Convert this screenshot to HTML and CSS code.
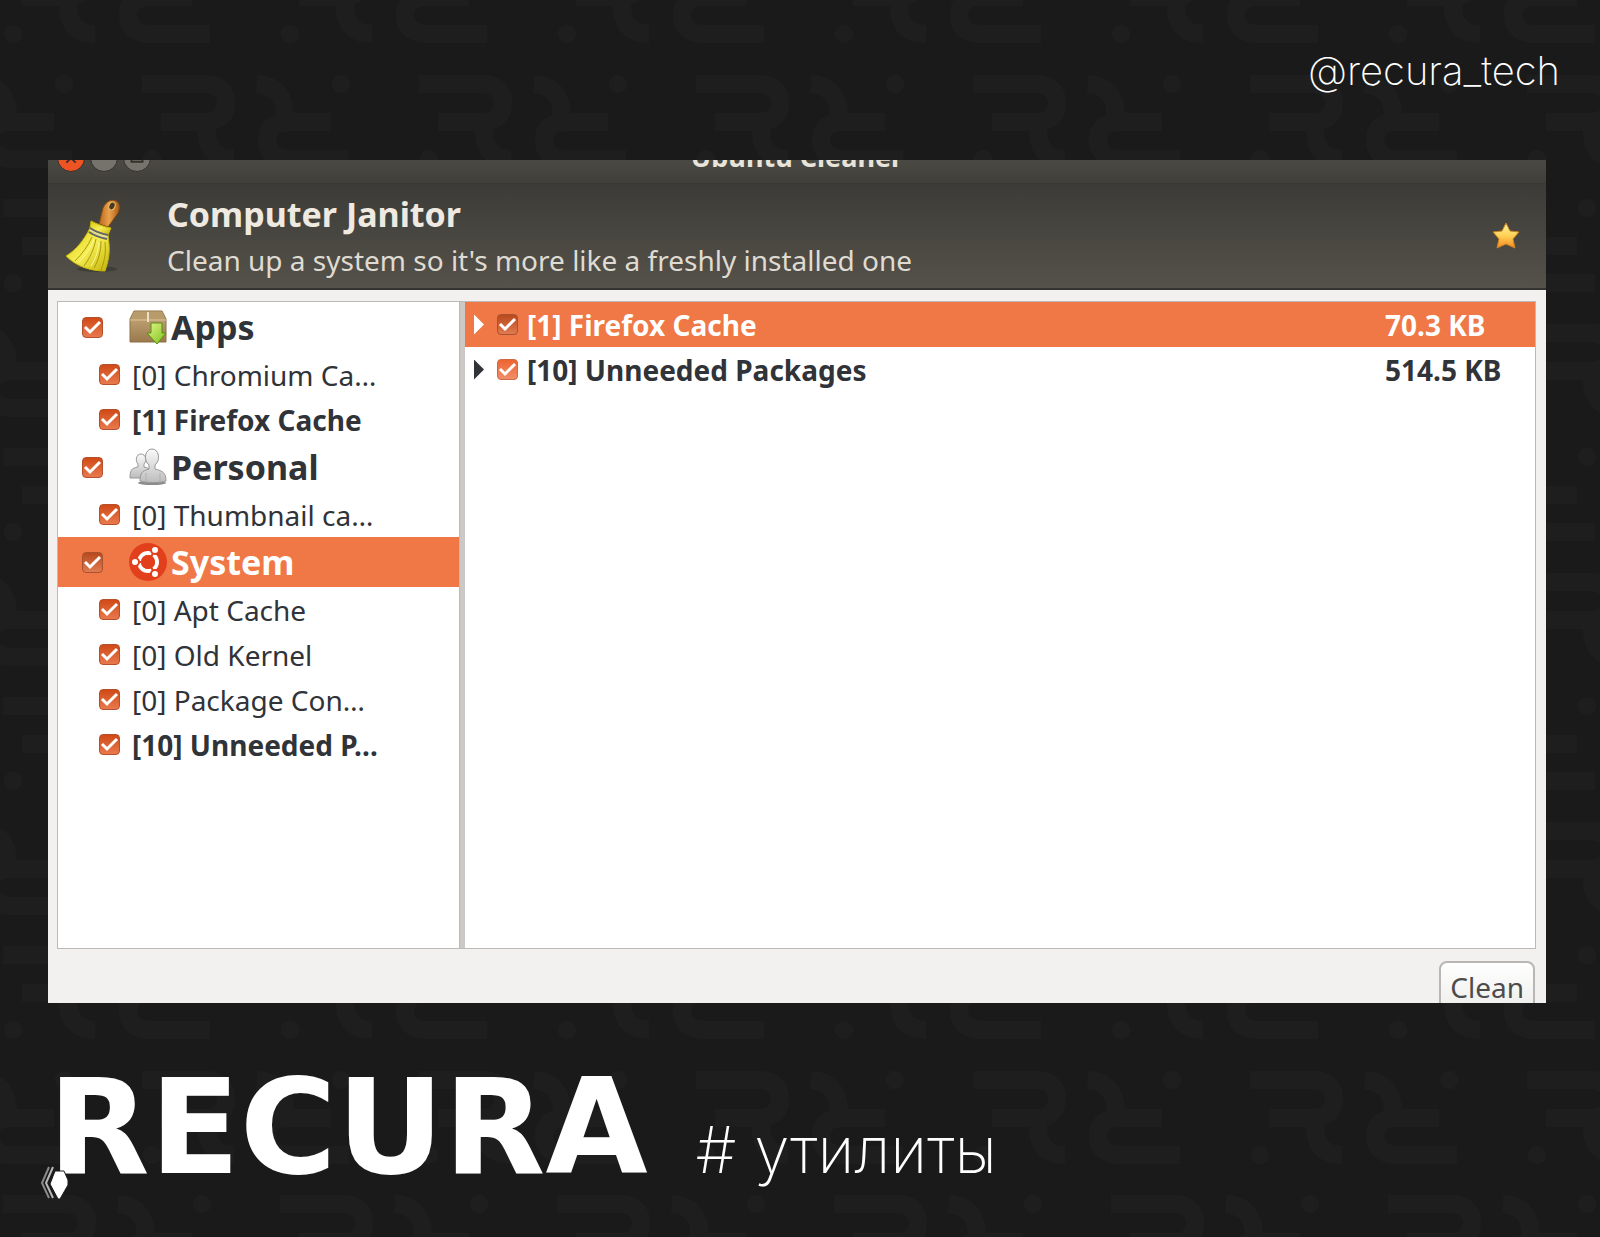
FILE: index.html
```html
<!DOCTYPE html>
<html lang="ru">
<head>
    <meta charset="UTF-8">
    <meta name="viewport" content="width=device-width, initial-scale=1.0">
    <title>RECURA # утилиты</title>
    <link rel="stylesheet" href="styles.css">
</head>
<body>
    <header class="top">
        <a href="#" class="handle">@recura_tech</a>
    </header>

    <main class="window">
        <div class="titlebar">
            <div class="window-buttons">
                <button class="wbtn close" aria-label="Close">
                    <svg viewBox="0 0 28 28"><path d="M9 9l10 10M19 9L9 19"/></svg>
                </button>
                <button class="wbtn" aria-label="Minimize">
                    <svg viewBox="0 0 28 28"><path d="M9 14h10"/></svg>
                </button>
                <button class="wbtn" aria-label="Maximize">
                    <svg viewBox="0 0 28 28"><path d="M8 9h12v9H8z"/></svg>
                </button>
            </div>
            <div class="window-title">Ubuntu Cleaner</div>
        </div>

        <div class="banner">
            <svg class="broom" viewBox="0 0 56 74">
                <defs>
                    <linearGradient id="wood" x1="0" x2="1">
                        <stop offset="0" stop-color="#b8691b"/>
                        <stop offset=".5" stop-color="#eaa14b"/>
                        <stop offset="1" stop-color="#a85d16"/>
                    </linearGradient>
                    <linearGradient id="straw" x1="0" x2="1" y2="1">
                        <stop offset="0" stop-color="#d8c80c"/>
                        <stop offset=".5" stop-color="#f6ee54"/>
                        <stop offset="1" stop-color="#c4b208"/>
                    </linearGradient>
                </defs>
                <ellipse cx="32" cy="70" rx="20" ry="3" fill="#2e2d29" opacity=".5"/>
                <path d="M34 25L38 9C41 2 47 0 51 2c4 2 4 7 2 12L43 28z" fill="url(#wood)" stroke="#8a4c10"/>
                <ellipse cx="47" cy="7" rx="3" ry="4" transform="rotate(25 47 7)" fill="#4b3a22" stroke="#f0c070"/>
                <path d="M26 22c6 3 13 6 20 7l-3 7c-7-1-13-4-18-7z" fill="url(#straw)" stroke="#c5b60b"/>
                <path d="M25 29c6 4 12 6 18 7l1 9c1 10-1 18-4 27C26 72 12 68 1 57c10-6 18-16 24-28z" fill="url(#straw)" stroke="#c5b60b"/>
                <path d="M27 38C23 47 17 55 10 62M31 40C29 50 25 59 19 67M36 42c0 10-2 18-7 27M40 43c1 10 0 18-4 28" fill="none" stroke="#a89a08"/>
                <path d="M29 40C25 50 20 57 14 63M34 43c-1 9-3 16-8 24" fill="none" stroke="#fbf79a"/>
                <path d="M25 29c6 4 12 6 18 7M24 33c6 4 12 6 18 7" fill="none" stroke="#65656d" stroke-width="2"/>
                <path d="M25 31c6 4 12 6 17 7" fill="none" stroke="#d8d8d8"/>
            </svg>
            <div class="banner-text">
                <h1>Computer Janitor</h1>
                <p>Clean up a system so it's more like a freshly installed one</p>
            </div>
            <button class="star" aria-label="Favourite">
                <svg viewBox="0 0 28 28">
                    <defs>
                        <linearGradient id="gold" x2="0" y2="1">
                            <stop offset="0" stop-color="#fff3a0"/>
                            <stop offset=".5" stop-color="#ffd257"/>
                            <stop offset="1" stop-color="#f58a1f"/>
                        </linearGradient>
                    </defs>
                    <path d="M14 1l4 8 9 1-6 7 2 9-9-4-9 4 2-9-6-7 9-1z" fill="url(#gold)" stroke="#c9821c" stroke-linejoin="round"/>
                </svg>
            </button>
        </div>

        <div class="content">
            <div class="panes">
                <ul class="tree">
                    <li>
                        <label class="row group">
                            <input type="checkbox" checked>
                            <svg class="icon" viewBox="0 0 38 38">
                                <defs>
                                    <linearGradient id="box" x2="0" y2="1">
                                        <stop offset="0" stop-color="#c9ab7c"/>
                                        <stop offset="1" stop-color="#9a7a4d"/>
                                    </linearGradient>
                                    <linearGradient id="arrow" x2="1" y2="1">
                                        <stop offset="0" stop-color="#e2f68a"/>
                                        <stop offset="1" stop-color="#7cc018"/>
                                    </linearGradient>
                                </defs>
                                <path d="M1 11L5 3h28l4 8v23H1z" fill="url(#box)" stroke="#8d7044"/>
                                <path d="M2 11L6 4h26l4 7z" fill="#b99a6a"/>
                                <path d="M1 12h36" stroke="#dcc49b"/>
                                <path d="M19 4v10" stroke="#eadfc8" stroke-width="2"/>
                                <path d="M22 15h11v10h4l-9 11-10-11h4z" fill="url(#arrow)" stroke="#539010" stroke-linejoin="round"/>
                            </svg>
                            <span>Apps</span>
                        </label>
                        <ul>
                            <li><label class="row"><input type="checkbox" checked><span>[0] Chromium Ca…</span></label></li>
                            <li><label class="row bold"><input type="checkbox" checked><span>[1] Firefox Cache</span></label></li>
                        </ul>
                    </li>
                    <li>
                        <label class="row group">
                            <input type="checkbox" checked>
                            <svg class="icon" viewBox="0 0 38 38">
                                <defs>
                                    <linearGradient id="silver" x2="0" y2="1">
                                        <stop offset="0" stop-color="#fafafa"/>
                                        <stop offset="1" stop-color="#bdbdbd"/>
                                    </linearGradient>
                                </defs>
                                <ellipse cx="23" cy="35" rx="14" ry="2" fill="#8c8c8c"/>
                                <g fill="url(#silver)" stroke="#989898">
                                    <path d="M1 30c0-7 1-10 8-11V16C6 13 7 6 12 6s6 7 3 10v3c6 1 8 4 8 11z"/>
                                    <path d="M11 33c0-8 2-10 9-12v-4c-6-5-4-16 3-16s9 11 3 16v4c8 2 11 4 11 12-6 2-20 2-26 0z"/>
                                </g>
                                <path d="M17 25v9M31 25v9" stroke="#b0b0b0"/>
                            </svg>
                            <span>Personal</span>
                        </label>
                        <ul>
                            <li><label class="row"><input type="checkbox" checked><span>[0] Thumbnail ca…</span></label></li>
                        </ul>
                    </li>
                    <li>
                        <label class="row group selected">
                            <input type="checkbox" checked>
                            <svg class="icon" viewBox="0 0 38 38">
                                <circle cx="19" cy="19" r="19" fill="#e2401c"/>
                                <circle cx="19" cy="19" r="9" fill="none" stroke="#fff" stroke-width="4"/>
                                <g stroke="#e2401c" stroke-width="2">
                                    <path d="M19 19H5M19 19l7-12M19 19l7 12"/>
                                    <circle cx="6" cy="19" r="4" fill="#fff"/>
                                    <circle cx="26" cy="7" r="4" fill="#fff"/>
                                    <circle cx="26" cy="31" r="4" fill="#fff"/>
                                </g>
                                <circle cx="19" cy="19" r="7" fill="#e2401c"/>
                            </svg>
                            <span>System</span>
                        </label>
                        <ul>
                            <li><label class="row"><input type="checkbox" checked><span>[0] Apt Cache</span></label></li>
                            <li><label class="row"><input type="checkbox" checked><span>[0] Old Kernel</span></label></li>
                            <li><label class="row"><input type="checkbox" checked><span>[0] Package Con…</span></label></li>
                            <li><label class="row bold"><input type="checkbox" checked><span>[10] Unneeded P…</span></label></li>
                        </ul>
                    </li>
                </ul>

                <div class="results">
                    <table>
                        <tbody>
                            <tr class="selected">
                                <td>
                                    <div class="result">
                                        <button class="expander" aria-label="Expand"></button>
                                        <input type="checkbox" id="firefox" checked>
                                        <label for="firefox">[1] Firefox Cache</label>
                                    </div>
                                </td>
                                <td class="size">70.3 KB</td>
                            </tr>
                            <tr>
                                <td>
                                    <div class="result">
                                        <button class="expander" aria-label="Expand"></button>
                                        <input type="checkbox" id="packages" class="light" checked>
                                        <label for="packages">[10] Unneeded Packages</label>
                                    </div>
                                </td>
                                <td class="size">514.5 KB</td>
                            </tr>
                        </tbody>
                    </table>
                </div>
            </div>
            <div class="actions">
                <button class="clean">Clean</button>
            </div>
        </div>
    </main>

    <footer class="brand">
        <div class="logo">
            RECURA
            <svg class="pen" viewBox="0 0 30 34">
                <path d="M9 1L2 17l7 15" fill="none" stroke="#8a8a8a" stroke-width="2"/>
                <path d="M13 1L6 17l7 15" fill="none" stroke="#b8b8b8" stroke-width="2"/>
                <path d="M15 5h9l4 9v5l-8 14h-2l-8-15z" fill="#fff" stroke="#1a1a1a"/>
            </svg>
        </div>
        <div class="tag"># утилиты</div>
    </footer>
</body>
</html>
```
FILE: styles.css
```css
* {
    margin: 0;
    padding: 0;
    box-sizing: border-box;
}

body {
    display: flex;
    flex-direction: column;
    height: 100vh;
    padding: 0 54px 0 48px;
    font-family: "Noto Sans", "Open Sans", sans-serif;
    font-size: 28px;
    color: #303338;
    background-color: #1a1a1a;
    /* repeating brand ornament, two staggered rows per tile */
    background-image: url("data:image/svg+xml,%3Csvg xmlns='http://www.w3.org/2000/svg' width='277' height='249'%3E%3Cdefs%3E%3Cg id='a'%3E%3Cg fill='none' stroke='%231e1e1e' stroke-width='18'%3E%3Cpath d='M5 14H70Q89 16 89 33T70 52H24M70 56V64Q72 89 97 89M120 14Q148 16 148 47M194 52H150Q130 53 130 70T150 89H212'/%3E%3C/g%3E%3Cg fill='%231e1e1e'%3E%3Ccircle cx='15' cy='89' r='9'/%3E%3Ccircle cx='204' cy='14' r='9'/%3E%3C/g%3E%3C/g%3E%3C/defs%3E%3Cuse href='%23a'/%3E%3Cuse href='%23a' x='138' y='124'/%3E%3Cuse href='%23a' x='-139' y='124'/%3E%3C/svg%3E");
    background-position: 137px 70px;
}

ul {
    list-style: none;
}

button {
    border: none;
    background: none;
    font: inherit;
    cursor: pointer;
}

.top {
    display: flex;
    justify-content: flex-end;
    align-items: center;
    height: 160px;
    padding: 0 0 20px;
    margin-right: -14px;
    flex-shrink: 0;
}

.handle {
    font-family: Inter, sans-serif;
    font-size: 40px;
    font-weight: 200;
    color: #fff;
    text-decoration: none;
}

/* window */
.window {
    display: flex;
    flex-direction: column;
    flex: 1;
    min-height: 0;
    overflow: hidden;
    background-color: #f2f1f0;
}

.titlebar {
    position: relative;
    display: flex;
    align-items: flex-end;
    justify-content: center;
    height: 24px;
    overflow: hidden;
    flex-shrink: 0;
    background: linear-gradient(#4a4943, #403f3a);
    border-bottom: 1px solid #3a3934;
}

.window-buttons {
    position: absolute;
    left: 9px;
    bottom: 11px;
    display: flex;
    gap: 5px;
}

.wbtn {
    width: 28px;
    height: 28px;
    border-radius: 50%;
    border: 1px solid #33322e;
    background: #75736b;
}

.wbtn.close {
    background: #ee5423;
}

.wbtn svg {
    display: block;
    fill: none;
    stroke: #33322e;
    stroke-width: 2;
}

.window-title {
    font-size: 27px;
    font-weight: bold;
    line-height: 36px;
    padding-bottom: 8px;
    color: #e8e4da;
}

.banner {
    display: flex;
    align-items: center;
    height: 106px;
    padding: 0 26px 0 17px;
    flex-shrink: 0;
    background: linear-gradient(#3c3b37, #55524a);
    border-bottom: 2px solid #34332f;
}

.broom {
    width: 56px;
    height: 78px;
}

.banner-text {
    flex: 1;
    padding-left: 46px;
    color: #dfdbd2;
}

.banner-text h1 {
    font-size: 34px;
    line-height: 48px;
    color: #eeeae2;
}

.banner-text p {
    line-height: 44px;
}

.star,
.star svg {
    display: block;
    width: 28px;
    height: 28px;
}

.content {
    display: flex;
    flex-direction: column;
    flex: 1;
    min-height: 0;
    padding: 11px 10px 0 9px;
}

.panes {
    display: flex;
    flex: 1;
    gap: 5px;
    min-height: 0;
    background: #cbc8c5;
    border: 1px solid #bcb9b6;
}

.tree {
    flex: 0 0 402px;
    background: #fff;
    border-right: 1px solid #bcb9b6;
}

.row {
    display: flex;
    align-items: center;
    height: 45px;
    padding-left: 41px;
    gap: 12px;
    white-space: nowrap;
}

.group {
    height: 50px;
    padding-left: 24px;
    gap: 4px;
    font-size: 34px;
    font-weight: bold;
}

.group input {
    margin-right: 22px;
}

.icon {
    width: 38px;
    height: 38px;
}

.bold {
    font-weight: bold;
}

.selected {
    color: #fff;
    background: #f07746;
}

input[type="checkbox"] {
    appearance: none;
    flex-shrink: 0;
    width: 21px;
    height: 21px;
    border: 1px solid #b5502a;
    border-radius: 4px;
    background: url("data:image/svg+xml,%3Csvg xmlns='http://www.w3.org/2000/svg' viewBox='0 0 19 19'%3E%3Cpath d='M2 9l5 5 10-10' fill='none' stroke='white' stroke-width='3'/%3E%3C/svg%3E"), linear-gradient(#d04a17, #e8794d);
}

.selected input[type="checkbox"] {
    border-color: #a9522f;
    background: url("data:image/svg+xml,%3Csvg xmlns='http://www.w3.org/2000/svg' viewBox='0 0 19 19'%3E%3Cpath d='M2 9l5 5 10-10' fill='none' stroke='white' stroke-width='3'/%3E%3C/svg%3E"), linear-gradient(#b8491d, #e07a50);
}

input[type="checkbox"].light {
    border-color: #cf6a45;
    background: url("data:image/svg+xml,%3Csvg xmlns='http://www.w3.org/2000/svg' viewBox='0 0 19 19'%3E%3Cpath d='M2 9l5 5 10-10' fill='none' stroke='white' stroke-width='3'/%3E%3C/svg%3E"), linear-gradient(#ee6430, #f08f6a);
}

.results {
    flex: 1;
    background: #fff;
}

.results table {
    width: 100%;
    border-collapse: collapse;
    font-weight: bold;
}

.results td {
    height: 45px;
}

.result {
    display: flex;
    align-items: center;
    padding-left: 9px;
}

.expander {
    width: 10px;
    height: 20px;
    margin-right: 13px;
    background: currentColor;
    color: inherit;
    clip-path: polygon(0 0, 100% 50%, 0 100%);
}

.result label {
    padding-left: 9px;
}

.size {
    width: 150px;
    white-space: nowrap;
}

.actions {
    display: flex;
    justify-content: flex-end;
    height: 54px;
    padding: 12px 1px 0;
    flex-shrink: 0;
}

.clean {
    height: 52px;
    padding: 0 9px;
    color: #4c4c4c;
    border: 2px solid #b9b6b3;
    border-radius: 8px;
    background: linear-gradient(#fff, #ededec);
}

/* branding */
.brand {
    display: flex;
    align-items: baseline;
    gap: 48px;
    height: 234px;
    padding-top: 49px;
    flex-shrink: 0;
    color: #fff;
}

.logo {
    position: relative;
    font-family: "DejaVu Sans", sans-serif;
    font-size: 132px;
    font-weight: bold;
    line-height: 150px;
}

.pen {
    position: absolute;
    left: -8px;
    bottom: 2px;
    width: 30px;
    height: 34px;
}

.tag {
    font-family: Inter, sans-serif;
    font-size: 64px;
    font-weight: 200;
}
```
